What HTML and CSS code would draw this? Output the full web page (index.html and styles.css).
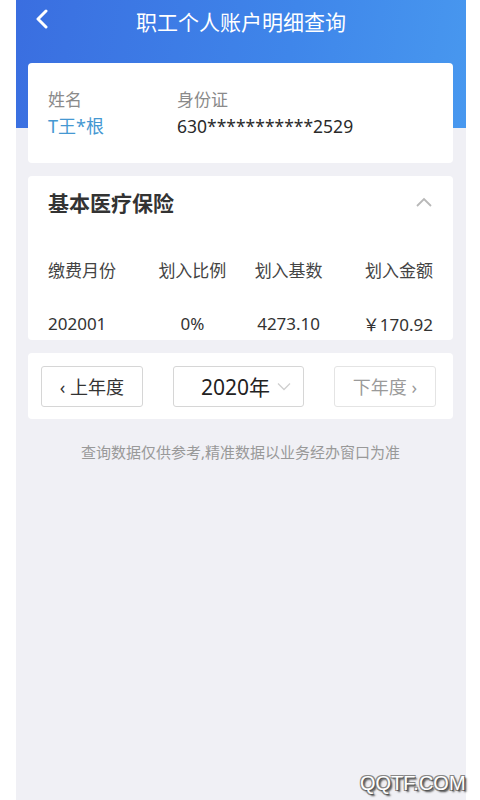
FILE: index.html
```html
<!DOCTYPE html>
<html lang="zh-CN">
<head>
    <meta charset="UTF-8">
    <meta name="viewport" content="width=device-width, initial-scale=1.0">
    <title>职工个人账户明细查询</title>
    <link rel="stylesheet" href="styles.css">
</head>
<body>
    <div class="phone">
        <div class="header">
            <div class="topbar">
                <span class="back">
                    <svg width="14" height="20" viewBox="0 0 14 20"><path d="M11 2 L3 10 L11 18" fill="none" stroke="#fff" stroke-width="3" stroke-linecap="round" stroke-linejoin="round"/></svg>
                </span>
                <h1>职工个人账户明细查询</h1>
            </div>
        </div>

        <div class="content">
            <div class="card info">
                <div class="info-col">
                    <span class="label">姓名</span>
                    <span class="name">T王*根</span>
                </div>
                <div class="info-col">
                    <span class="label">身份证</span>
                    <span class="idno">630***********2529</span>
                </div>
            </div>

            <div class="card detail">
                <div class="detail-title">
                    <h2>基本医疗保险</h2>
                    <svg width="18" height="12" viewBox="0 0 18 12"><path d="M2 10 L9 3 L16 10" fill="none" stroke="#b8b8b8" stroke-width="1.8"/></svg>
                </div>
                <div class="row head">
                    <span>缴费月份</span>
                    <span>划入比例</span>
                    <span>划入基数</span>
                    <span>划入金额</span>
                </div>
                <div class="row">
                    <span>202001</span>
                    <span>0%</span>
                    <span>4273.10</span>
                    <span>￥170.92</span>
                </div>
            </div>

            <div class="card years">
                <button class="btn">&lsaquo; 上年度</button>
                <div class="select">
                    <span>2020年</span>
                    <svg width="14" height="9" viewBox="0 0 14 9"><path d="M1 1.5 L7 7.5 L13 1.5" fill="none" stroke="#cfcfcf" stroke-width="1.3"/></svg>
                </div>
                <button class="btn disabled">下年度 &rsaquo;</button>
            </div>

            <p class="note">查询数据仅供参考,精准数据以业务经办窗口为准</p>
        </div>
    </div>
    <div class="watermark">QQTF.COM</div>
</body>
</html>
```

FILE: styles.css
```css
body {
    margin: 0;
    background: #fff;
    font-family: "Noto Sans", "Noto Sans CJK SC", sans-serif;
    color: #333;
}
.phone {
    width: 450px;
    margin-left: 16px;
    min-height: 800px;
    background: #f0f0f5;
}
.header {
    height: 128px;
    background: linear-gradient(100deg, #3a6ee0 0%, #3f86ea 60%, #4898ef 100%);
}
.topbar {
    height: 42px;
    display: flex;
    align-items: center;
    justify-content: center;
    position: relative;
}
.back {
    position: absolute;
    left: 19px;
    top: 9px;
}
.topbar h1 {
    margin: 0;
    font-size: 21px;
    font-weight: normal;
    color: #fff;
}
.content {
    margin-top: -65px;
    padding: 0 13px 0 12px;
}
.card {
    background: #fff;
    border-radius: 4px;
    margin-bottom: 13px;
}
.info {
    height: 100px;
    box-sizing: border-box;
    padding: 23px 20px 0;
    display: grid;
    grid-template-columns: 129px 1fr;
}
.info-col {
    display: flex;
    flex-direction: column;
}
.label {
    font-size: 17px;
    line-height: 27px;
    color: #8a8a8a;
}
.name {
    font-size: 18px;
    line-height: 27px;
    color: #4598d2;
}
.idno {
    font-size: 17.5px;
    line-height: 27px;
    color: #2a2a2a;
}
.detail {
    height: 164px;
    padding: 0 20px;
}
.detail-title {
    height: 52px;
    display: flex;
    align-items: center;
    justify-content: space-between;
}
.detail-title h2 {
    margin: 0;
    font-size: 21px;
    font-weight: bold;
    color: #333;
}
.row {
    display: grid;
    grid-template-columns: repeat(4, 1fr);
    height: 54px;
    align-items: center;
    font-size: 17px;
    color: #333;
}
.row.head {
    margin-top: 14px;
    color: #444;
}
.row span:nth-child(2),
.row span:nth-child(3) {
    text-align: center;
}
.row span:nth-child(4) {
    text-align: right;
}
.years {
    display: flex;
    justify-content: space-between;
    align-items: center;
    height: 66px;
    padding: 0 17px 0 13px;
}
.btn {
    width: 102px;
    height: 41px;
    background: #fff;
    border: 1px solid #d6d6d6;
    border-radius: 3px;
    font-family: inherit;
    font-size: 18px;
    color: #333;
    padding: 0;
}
.btn.disabled {
    color: #9a9a9a;
    border-color: #e4e4e4;
}
.select {
    width: 131px;
    height: 41px;
    box-sizing: border-box;
    border: 1px solid #d6d6d6;
    border-radius: 3px;
    display: flex;
    align-items: center;
    justify-content: flex-end;
    gap: 7px;
    padding-right: 12px;
    font-size: 21px;
    color: #222;
}
.note {
    margin: 22px 0 0;
    text-align: center;
    font-size: 15px;
    color: #999;
}
.watermark {
    position: absolute;
    left: 360px;
    top: 772px;
    font-family: "Liberation Sans", Arial, sans-serif;
    font-size: 20px;
    color: #fff;
    text-shadow: 1px 1px 0 #555, -1px -1px 0 #888, 1px -1px 0 #888, -1px 1px 0 #888, 2px 2px 2px #333;
}
```
